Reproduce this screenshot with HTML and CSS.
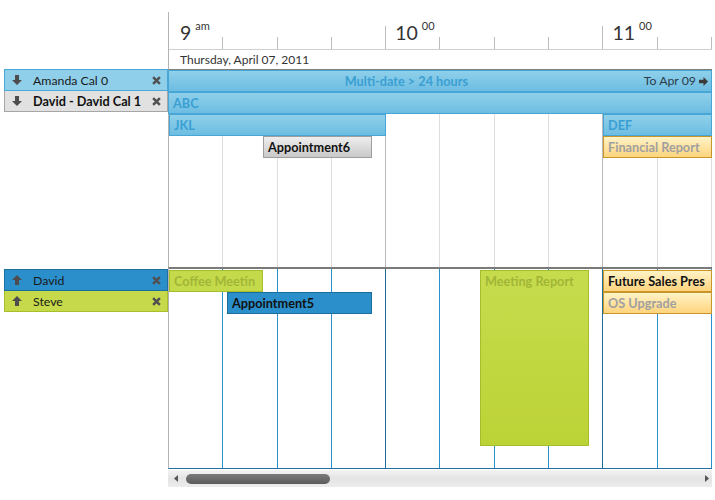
FILE: index.html
```html
<!DOCTYPE html>
<html>
<head>
<meta charset="utf-8">
<link rel="stylesheet" href="styles.css">
</head>
<body>
<div class="scheduler">
  <div class="row header">
    <div class="side"></div>
    <div class="timehead">
      <div class="ruler">
        <div class="tick"><span class="hour first">9<sup>am</sup></span></div>
        <div class="tick"></div>
        <div class="tick"></div>
        <div class="tick major"></div>
        <div class="tick"><span class="hour">10<sup>00</sup></span></div>
        <div class="tick"></div>
        <div class="tick"></div>
        <div class="tick major"></div>
        <div class="tick"><span class="hour">11<sup>00</sup></span></div>
        <div class="tick"></div>
      </div>
      <div class="date">Thursday, April 07, 2011</div>
    </div>
  </div>

  <div class="row group g1">
    <div class="side">
      <div class="res res-amanda">
        <svg class="ico-arrow" viewBox="0 0 10 10"><path d="M3 0h4v5h3L5 10 0 5h3z"/></svg>
        <span class="name">Amanda Cal 0</span>
        <svg class="ico-x" viewBox="0 0 8 8"><path d="M1 1l6 6M7 1L1 7"/></svg>
      </div>
      <div class="res res-david1">
        <svg class="ico-arrow" viewBox="0 0 10 10"><path d="M3 0h4v5h3L5 10 0 5h3z"/></svg>
        <span class="name">David - David Cal 1</span>
        <svg class="ico-x" viewBox="0 0 8 8"><path d="M1 1l6 6M7 1L1 7"/></svg>
      </div>
    </div>
    <div class="lane lane1">
      <div class="slot"></div><div class="slot"></div><div class="slot"></div><div class="slot hr"></div>
      <div class="slot"></div><div class="slot"></div><div class="slot"></div><div class="slot hr"></div>
      <div class="slot"></div><div class="slot"></div>

      <div class="appt blue multi" style="left:-1px;top:0;width:544px;height:22px">
        <span class="mtitle">Multi-date &gt; 24 hours</span>
        <span class="to">To Apr 09<svg class="ico-right" viewBox="0 0 10 10"><path d="M0 3h5V0l5 5-5 5V7H0z"/></svg></span>
      </div>
      <div class="appt blue" style="left:-1px;top:22px;width:544px;height:22px">ABC</div>
      <div class="appt blue" style="left:0;top:44px;width:217px;height:22px">JKL</div>
      <div class="appt blue" style="left:434px;top:44px;width:109px;height:22px">DEF</div>
      <div class="appt gray" style="left:94px;top:66px;width:109px;height:22px">Appointment6</div>
      <div class="appt yellow muted" style="left:434px;top:66px;width:109px;height:22px">Financial Report</div>
    </div>
  </div>

  <div class="row group g2">
    <div class="side">
      <div class="res res-david">
        <svg class="ico-arrow" viewBox="0 0 10 10"><path d="M3 10h4V5h3L5 0 0 5h3z"/></svg>
        <span class="name">David</span>
        <svg class="ico-x" viewBox="0 0 8 8"><path d="M1 1l6 6M7 1L1 7"/></svg>
      </div>
      <div class="res res-steve">
        <svg class="ico-arrow" viewBox="0 0 10 10"><path d="M3 10h4V5h3L5 0 0 5h3z"/></svg>
        <span class="name">Steve</span>
        <svg class="ico-x" viewBox="0 0 8 8"><path d="M1 1l6 6M7 1L1 7"/></svg>
      </div>
    </div>
    <div class="lane lane2">
      <div class="slot"></div><div class="slot"></div><div class="slot"></div><div class="slot hr"></div>
      <div class="slot"></div><div class="slot"></div><div class="slot"></div><div class="slot hr"></div>
      <div class="slot"></div><div class="slot"></div>

      <div class="appt green" style="left:0;top:1px;width:94px;height:22px">Coffee Meetin</div>
      <div class="appt dblue" style="left:58px;top:23px;width:145px;height:22px">Appointment5</div>
      <div class="appt green tall" style="left:311px;top:1px;width:109px;height:176px">Meeting Report</div>
      <div class="appt yellow" style="left:434px;top:1px;width:109px;height:22px">Future Sales Pres</div>
      <div class="appt yellow muted" style="left:434px;top:23px;width:109px;height:22px">OS Upgrade</div>
    </div>
  </div>

  <div class="row scroll-row">
    <div class="side"></div>
    <div class="scrollbar">
      <svg class="sb-arrow" viewBox="0 0 4 7"><path d="M4 0v7L0 3.5z"/></svg>
      <div class="thumb"></div>
      <div class="sb-fill"></div>
      <svg class="sb-arrow" viewBox="0 0 4 7"><path d="M0 0v7l4-3.5z"/></svg>
    </div>
  </div>
</div>
</body>
</html>
```

FILE: styles.css
```css
body {
  margin: 0;
  background: #fff;
  font-family: Lato, "Liberation Sans", sans-serif;
  font-size: 12px;
  color: #222;
}

.scheduler { width: 715px; }

.row { display: flex; }

.side {
  width: 168px;
  flex: none;
  box-sizing: border-box;
  padding-left: 4px;
}

/* header */
.header { height: 69px; }

.timehead {
  margin-top: 12px;
  width: 544px;
  flex: none;
  box-sizing: border-box;
  border-left: 1px solid #b4b4b4;
}

.ruler {
  display: flex;
  height: 38px;
  box-sizing: border-box;
  border-bottom: 1px solid #cfcfcf;
}

.tick {
  flex: 1;
  position: relative;
}

.tick::after {
  content: "";
  position: absolute;
  right: 0;
  bottom: 0;
  width: 1px;
  height: 12px;
  background: #bdbdbd;
}

.tick.major::after { height: 23px; }

.hour {
  position: absolute;
  left: 9px;
  top: 11px;
  font-size: 19.5px;
  line-height: 19px;
  color: #333;
  white-space: nowrap;
}

.hour.first { left: 11px; }

.hour sup {
  font-size: 11px;
  line-height: 11px;
  vertical-align: top;
  position: relative;
  top: -3px;
  margin-left: 4px;
}

.date {
  height: 20px;
  line-height: 20px;
  padding-left: 11px;
  font-size: 12px;
  color: #333;
}

/* resource labels */
.res {
  display: flex;
  align-items: center;
  box-sizing: border-box;
  height: 21px;
  border: 1px solid;
  color: #1a1a1a;
  font-size: 12.3px;
}

.res + .res { border-top: none; height: 21px; }

.res:first-child { height: 22px; }

.ico-arrow {
  width: 10px;
  height: 10px;
  margin-left: 7px;
  fill: #4d4d4d;
  flex: none;
}

.name {
  margin-left: 11px;
  flex: 1;
  white-space: nowrap;
}

.ico-x {
  width: 9px;
  height: 9px;
  margin-right: 6px;
  flex: none;
  stroke: #505050;
  stroke-width: 2.2;
  fill: none;
}

.res-amanda { background: #8fcfe9; border-color: #4ba8d6; }
.res-david1 { background: #e1e1e1; border-color: #a6a6a6; font-weight: bold; color: #111; font-size: 12.7px; }
.res-david { background: #2a8fcb; border-color: #1e6e9f; }
.res-steve { background: #c5d94b; border-color: #a8bf2c; }

.g2 .side { padding-top: 2px; }

/* lanes */
.lane {
  position: relative;
  width: 544px;
  flex: none;
  box-sizing: border-box;
  border-left: 1px solid #b4b4b4;
  display: flex;
}

.lane1 {
  height: 198px;
  border-top: 1px solid #808080;
}

.lane2 {
  height: 202px;
  border-top: 2px solid #7a7a7a;
  border-bottom: 1px solid #1f6fa0;
}

.slot {
  flex: 1;
  border-right: 1px solid #dedede;
}

.lane1 .slot.hr { border-right-color: #b9b9b9; }
.lane2 .slot { border-right-color: #2b90cc; }
.lane2 .slot.hr { border-right-color: #1f6d9c; }

/* appointments */
.appt {
  position: absolute;
  box-sizing: border-box;
  border: 1px solid;
  font-weight: bold;
  font-size: 12.7px;
  line-height: 20px;
  padding-left: 4px;
  white-space: nowrap;
  overflow: hidden;
}

.blue {
  background: linear-gradient(#8fd0ea, #6dbde2);
  border-color: #47a6d6;
  color: #3a9fd3;
}

.gray {
  background: linear-gradient(#eeeeee, #c9c9c9);
  border-color: #9e9e9e;
  color: #111;
}

.yellow {
  background: linear-gradient(#fff3c6, #ffd47e);
  border-color: #c9962a;
  color: #111;
}

.yellow.muted { color: #a0a0a0; }

.green {
  background: #c5da4b;
  border-color: #a6bd2c;
  color: #a1b637;
}

.green.tall { background: linear-gradient(#c7dc4d, #bcd336); }

.dblue {
  background: #2a8fcb;
  border-color: #1d6d9c;
  color: #111;
}

.multi {
  display: flex;
  padding-left: 0;
}

.mtitle {
  flex: 1;
  text-align: center;
}

.to {
  display: flex;
  align-items: center;
  font-weight: normal;
  font-size: 12.3px;
  color: #2b3b48;
  padding-right: 3px;
}

.ico-right {
  width: 9px;
  height: 9px;
  margin-left: 3px;
  fill: #3b3b3b;
}

/* scrollbar */
.scrollbar {
  margin-top: 1px;
  width: 544px;
  height: 17px;
  flex: none;
  box-sizing: border-box;
  background: linear-gradient(#f3f3f3, #e4e4e4 50%, #ececec);
  display: flex;
  align-items: center;
  padding: 0 3px 0 6px;
}

.sb-arrow {
  width: 4px;
  height: 7px;
  fill: #555;
  flex: none;
}

.thumb {
  width: 144px;
  height: 10px;
  margin-left: 8px;
  border-radius: 5px;
  background: linear-gradient(#7a7a7a, #5c5c5c);
  flex: none;
}

.sb-fill { flex: 1; }
```
